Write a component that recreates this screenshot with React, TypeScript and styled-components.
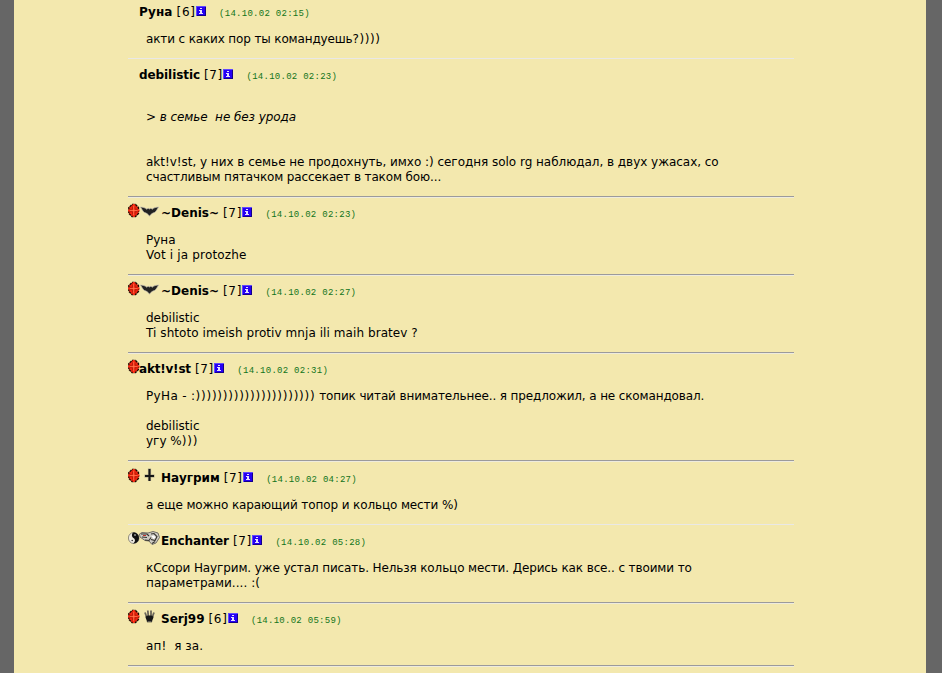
import React from 'react';
import styled, { createGlobalStyle } from 'styled-components';

const GlobalStyle = createGlobalStyle`
  html, body {
    margin: 0;
    background: #666666;
    overflow: hidden;
  }
`;

const Page = styled.main`
  box-sizing: border-box;
  height: 673px;
  margin: 0 16px 0 14px;
  padding: 0 132px 0 114px;
  overflow: hidden;
  background: #f3e8ae;
  color: #000;
  font: 12px/15px "DejaVu Sans", Verdana, sans-serif;
`;

const Divider = styled.hr<{ $light?: boolean }>`
  height: 0;
  margin: 0;
  border: 0;
  border-top: 1px solid ${(p) => (p.$light ? '#e9e8e6' : '#9b9a9c')};
  border-bottom: 1px solid ${(p) => (p.$light ? '#f3e8ae' : '#eeebdd')};
`;

const Header = styled.header<{ $height?: number }>`
  display: flex;
  align-items: flex-end;
  box-sizing: border-box;
  height: ${(p) => p.$height ?? 35}px;
  padding-bottom: 12px;
  white-space: pre;
`;

const Sign = styled.span<{ $width: number }>`
  display: flex;
  flex: none;
  width: ${(p) => p.$width}px;
  height: 18px;
  svg {
    display: block;
    flex: none;
  }
`;

const Name = styled.b<{ $spacing?: number }>`
  letter-spacing: ${(p) => p.$spacing ?? 0}px;
`;

const Level = styled.span`
  margin-left: 4px;
  letter-spacing: 0.65px;
`;

const InfoLink = styled.a`
  flex: none;
  width: 10px;
  height: 15px;
  padding-top: 1px;
  box-sizing: border-box;
  svg {
    display: block;
  }
`;

const Time = styled.time`
  margin-left: 13.5px;
  color: #11741a;
  font: 9px/11px "Liberation Mono", "Courier New", monospace;
  letter-spacing: 0.27px;
`;

const Body = styled.div`
  padding: 0 18px 11px;
`;

const Line = styled.p<{ $quote?: boolean }>`
  height: 15px;
  margin: 0;
  white-space: pre;
  font-style: ${(p) => (p.$quote ? 'italic' : 'normal')};
`;

const Run = styled.span<{ $spacing?: number }>`
  letter-spacing: ${(p) => p.$spacing ?? 0}px;
`;

const ChaosIcon = () => (
  <svg width="12" height="15" viewBox="0 0 12 15">
    <path d="M4 1.500h3.500l1.500 1.500 1.500 1.500v6L9 12l-1.500 1.500H4L2.500 12 .8 10.500v-6L2.500 3z" fill="#f5240f" stroke="#1c0a02" strokeWidth="1.300" strokeDasharray="2.600 .7" />
    <path d="M5.700 1v13M0 7.500h11.500" stroke="#ff2d14" strokeWidth="2" />
    <path d="M4.500 3.500v2.800H2M7 3.500v2.800h2.500M4.500 11.500V8.700H2M7 11.500V8.700h2.500" stroke="#8e1a0a" strokeWidth=".6" fill="none" />
    <path d="M5.700 3v9M2 7.500h7.500" stroke="#ff8a5c" strokeWidth=".6" />
  </svg>
);

const BatIcon = () => (
  <svg width="21" height="15" viewBox="0 0 21 15">
    <path
      d="M1 4c3 0 5.200 .8 7 2.300l1-1.300 1.500 1L12 5l1 1.300C14.800 4.800 17 4 20 4c-1.800 1.500-2.500 4.500-4.500 5.500-2 .6-3.500 1.500-5 3.700C9 11 7.500 10.100 5.500 9.500 3.500 8.500 3 5.500 1 4z"
      fill="#222"
      stroke="#cbc6b6"
      strokeWidth=".7"
    />
  </svg>
);

const SwordIcon = () => (
  <svg width="21" height="16" viewBox="0 0 21 16">
    <path d="M10.500 .5v12.500M5.500 8h10" stroke="#aaa38a" strokeWidth="3.200" />
    <path d="M10.500 1v12M6 8h9" stroke="#161616" strokeWidth="2" />
  </svg>
);

const BalanceIcon = () => (
  <svg width="12" height="14" viewBox="0 0 12 14">
    <ellipse cx="5.700" cy="7" rx="5.300" ry="5.500" fill="#eeeae0" stroke="#6a675e" strokeWidth=".7" />
    <path d="M5 1.600c8-.3 8 11 0 10.800 2.500-1.400 2.500-4.200.5-5.400S3.500 3 5 1.600z" fill="#111" />
    <circle cx="7" cy="4" r=".8" fill="#eee" />
    <circle cx="4.200" cy="9.500" r=".8" fill="#333" />
  </svg>
);

const FistIcon = () => (
  <svg width="22" height="15" viewBox="0 0 22 15">
    <path d="M.5 3L3 1.500l6 .5 5-1.500L19 2l1.500 4.500L17 12l-4 1.500L10 10l-4-.5L1 6z" fill="#cfccc4" stroke="#66635c" strokeWidth=".9" />
    <path d="M2 3h6l2 2M3 6l5 .5M6 9l4 .5 2-3M12 3l3-.5 3 3-2 4-4-1M13 12.500l3-2" stroke="#35332f" strokeWidth="1.100" fill="none" />
    <path d="M4 4.500h3" stroke="#c2352c" strokeWidth="1" />
    <path d="M12.500 5l2.500-.5 1.500 2-2 1.500z" fill="#fff" />
  </svg>
);

const PawIcon = () => (
  <svg width="21" height="15" viewBox="0 0 21 15">
    <path d="M6 3.500l1.500 4M8.800 1.500l.5 5.500M12 1.500V7M15 3.500l-1.500 4" stroke="#6b665a" strokeWidth="1.800" />
    <path d="M6.500 7.500c1-1.500 7-1.500 8 0 .3 2-1.500 3-1.500 5.800H8c0-2.800-1.800-3.800-1.500-5.800z" fill="#171717" />
    <path d="M8.500 12.500h4" stroke="#77736a" strokeWidth=".8" />
  </svg>
);

const InfoIcon = () => (
  <svg width="10" height="10" viewBox="0 0 10 10" shapeRendering="crispEdges">
    <path d="M0 0h10v10H0z" fill="#2600f4" />
    <path d="M0 0h10v1H1v9H0z" fill="#6048ff" />
    <path d="M9 1h1v9H1V9h8z" fill="#12008b" />
    <path d="M4 2h2v1H4zM3 4h3v3h1v1H3V7h1V5H3z" fill="#e4dfff" />
  </svg>
);

const clanIcons = {
  bat: BatIcon,
  sword: SwordIcon,
  fist: FistIcon,
  paw: PawIcon,
};

type TextRun = { text: string; spacing?: number };
type TextLine = { runs?: TextRun[]; quote?: boolean };

type Post = {
  name: string;
  nameSpacing?: number;
  level: number;
  time: string;
  align?: 'chaos' | 'balance';
  clan?: keyof typeof clanIcons;
  height?: number;
  light?: boolean;
  lines: TextLine[];
};

const posts: Post[] = [
  {
    name: 'Руна', nameSpacing: 0.15, level: 6, time: '14.10.02 02:15', height: 32,
    lines: [{ runs: [{ text: 'акти с каких пор ты командуешь', spacing: -0.14 }, { text: '?))))', spacing: 0.55 }] }],
  },
  {
    name: 'debilistic', nameSpacing: -0.08, level: 7, time: '14.10.02 02:23', light: true,
    lines: [
      {},
      { runs: [{ text: '> в семье  не без урода', spacing: -0.07 }], quote: true },
      {},
      {},
      { runs: [{ text: 'akt!v!st, у них в семье не продохнуть, имхо :) сегодня solo rg наблюдал, в двух ужасах, со', spacing: -0.03 }] },
      { runs: [{ text: 'счастливым пятачком рассекает в таком бою...', spacing: -0.13 }] },
    ],
  },
  {
    name: '~Denis~', level: 7, time: '14.10.02 02:23', align: 'chaos', clan: 'bat',
    lines: [{ runs: [{ text: 'Руна' }] }, { runs: [{ text: 'Vot i ja protozhe', spacing: 0.17 }] }],
  },
  {
    name: '~Denis~', level: 7, time: '14.10.02 02:27', align: 'chaos', clan: 'bat',
    lines: [
      { runs: [{ text: 'debilistic' }] },
      { runs: [{ text: 'Ti shtoto imeish protiv mnja ili maih bratev ?', spacing: 0.07 }] },
    ],
  },
  {
    name: 'akt!v!st', nameSpacing: -0.2, level: 7, time: '14.10.02 02:31', align: 'chaos',
    lines: [
      {
        runs: [
          { text: 'РуНа - :', spacing: 0.35 },
          { text: '))))))))))))))))))))))', spacing: 0.77 },
          { text: ' топик читай внимательнее.. я предложил, а не скомандовал.', spacing: -0.13 },
        ],
      },
      {},
      { runs: [{ text: 'debilistic' }] },
      { runs: [{ text: 'угу %' }, { text: ')))', spacing: 0.8 }] },
    ],
  },
  {
    name: 'Наугрим', nameSpacing: -0.05, level: 7, time: '14.10.02 04:27', align: 'chaos', clan: 'sword', height: 36,
    lines: [{ runs: [{ text: 'а еще можно карающий топор и кольцо мести %)', spacing: -0.11 }] }],
  },
  {
    name: 'Enchanter', nameSpacing: -0.1, level: 7, time: '14.10.02 05:28', align: 'balance', clan: 'fist', light: true,
    lines: [
      { runs: [{ text: 'кСсори Наугрим. уже устал писать. Нельзя кольцо мести. Дерись как все.. с твоими то', spacing: -0.12 }] },
      { runs: [{ text: 'параметрами.... :(', spacing: 0.04 }] },
    ],
  },
  {
    name: 'Serj99', level: 6, time: '14.10.02 05:59', align: 'chaos', clan: 'paw',
    lines: [{ runs: [{ text: 'ап!  я за.', spacing: 0.1 }] }],
  },
];

const PostItem = ({ post }: { post: Post }) => {
  const ClanIcon = post.clan ? clanIcons[post.clan] : null;

  return (
    <article>
      <Header $height={post.height}>
        <Sign $width={11}>
          {post.align === 'chaos' && <ChaosIcon />}
          {post.align === 'balance' && <BalanceIcon />}
        </Sign>
        {ClanIcon && (
          <Sign $width={22}>
            <ClanIcon />
          </Sign>
        )}
        <Name $spacing={post.nameSpacing}>{post.name}</Name>
        <Level>[{post.level}]</Level>
        <InfoLink>
          <InfoIcon />
        </InfoLink>
        <Time>({post.time})</Time>
      </Header>
      <Body>
        {post.lines.map((line, index) => (
          <Line key={index} $quote={line.quote}>
            {line.runs?.map((run) => (
              <Run key={run.text} $spacing={run.spacing}>{run.text}</Run>
            ))}
          </Line>
        ))}
      </Body>
    </article>
  );
};

const App = () => (
  <>
    <GlobalStyle />
    <Page>
      {posts.map((post, index) => (
        <React.Fragment key={index}>
          {index > 0 && <Divider $light={post.light} />}
          <PostItem post={post} />
        </React.Fragment>
      ))}
      <Divider />
    </Page>
  </>
);

export default App;
